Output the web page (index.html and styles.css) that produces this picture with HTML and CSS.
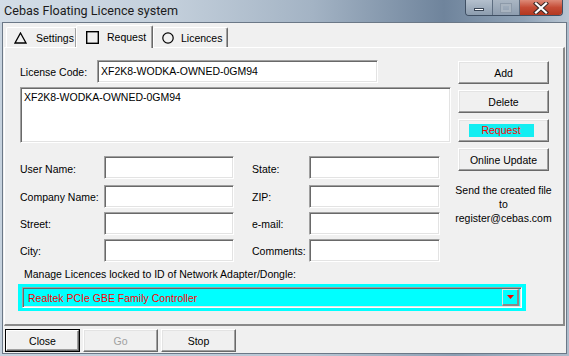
FILE: index.html
```html
<!DOCTYPE html>
<html lang="en">
<head>
    <meta charset="UTF-8">
    <meta name="viewport" content="width=device-width, initial-scale=1.0">
    <title>Cebas Floating Licence system</title>
  <link rel="stylesheet" href="styles.css">
</head>
<body>
<div class="window">
    <div class="titlebar">
        <span class="title">Cebas Floating Licence system</span>
        <div class="caption">
            <span class="cap cap-min"><i></i></span>
            <span class="cap cap-max"><i></i></span>
            <span class="cap cap-close">
                <svg width="16" height="12" viewBox="0 0 16 12">
                    <path d="M3 1.5 L13 10.5 M13 1.5 L3 10.5" stroke="#3b2a28" stroke-width="4.2" stroke-linecap="square"/>
                    <path d="M3 1.5 L13 10.5 M13 1.5 L3 10.5" stroke="#fff" stroke-width="2.2" stroke-linecap="square"/>
                </svg>
            </span>
        </div>
    </div>

    <div class="client">
        <div class="tabs">
            <div class="tab">
                <svg width="13" height="12" viewBox="0 0 13 12"><path d="M6.5 1 L12 11 H1 Z" fill="none" stroke="#000" stroke-width="1.3" stroke-linejoin="miter"/></svg>
                Settings
            </div>
            <div class="tab active">
                <svg width="13" height="13" viewBox="0 0 13 13"><rect x="0.7" y="0.7" width="11.6" height="11.6" fill="none" stroke="#000" stroke-width="1.4"/></svg>
                Request
            </div>
            <div class="tab">
                <svg width="12" height="12" viewBox="0 0 12 12"><circle cx="6" cy="6" r="5.2" fill="none" stroke="#000" stroke-width="1.2"/></svg>
                Licences
            </div>
        </div>

        <div class="panel">
            <div class="main">
                <div class="left">
                    <div class="code-row">
                        <span class="code-label">License Code:</span>
                        <div class="field code-field">XF2K8-WODKA-OWNED-0GM94</div>
                    </div>
                    <div class="field code-list">XF2K8-WODKA-OWNED-0GM94</div>

                    <div class="fields">
                        <span>User Name:</span><div class="field"></div><span></span>
                        <span>State:</span><div class="field"></div>

                        <span>Company Name:</span><div class="field"></div><span></span>
                        <span>ZIP:</span><div class="field"></div>

                        <span>Street:</span><div class="field"></div><span></span>
                        <span>e-mail:</span><div class="field"></div>

                        <span>City:</span><div class="field"></div><span></span>
                        <span>Comments:</span><div class="field"></div>
                    </div>
                </div>

                <div class="right">
                    <div class="btn side-btn">Add</div>
                    <div class="btn side-btn">Delete</div>
                    <div class="btn side-btn"><span class="request-mark">Request</span></div>
                    <div class="btn side-btn">Online Update</div>
                    <p class="note">Send the created file<br>to<br>register@cebas.com</p>
                </div>
            </div>

            <div class="adapter-label">Manage Licences locked to ID of Network Adapter/Dongle:</div>
            <div class="adapter">
                <div class="combo">
                    <span class="combo-text">Realtek PCIe GBE Family Controller</span>
                    <span class="combo-arrow">
                        <svg width="7" height="4" viewBox="0 0 7 4"><path d="M0 0 H7 L3.5 4 Z" fill="#f00"/></svg>
                    </span>
                </div>
            </div>
        </div>

        <div class="footer">
            <div class="btn foot-btn default"><span>Close</span></div>
            <div class="btn foot-btn disabled">Go</div>
            <div class="btn foot-btn">Stop</div>
        </div>
    </div>
</div>
</body>
</html>
```

FILE: styles.css
```css
*{
    margin: 0;
    padding: 0;
    box-sizing: border-box;
}
body{
    width: 569px;
    height: 356px;
    overflow: hidden;
    background: linear-gradient(to right, #c6d2de 0%, #b8c6d4 55%, #8b9eb3 80%, #aebccb 100%);
    font-family: "Liberation Sans", Arial, sans-serif;
    font-size: 10.5px;
    color: #000;
}
.window{
    width: 569px;
    height: 356px;
}

/* title bar */
.titlebar{
    height: 22px;
    display: flex;
    align-items: flex-start;
    justify-content: space-between;
    background: linear-gradient(to right, #d3dde7 0%, #c3cfdb 30%, #a3b3c4 55%, #6f849c 78%, #8fa2b6 92%, #b9c6d3 100%);
}
.title{
    font-family: Roboto, "Noto Sans", sans-serif;
    font-size: 12.6px;
    color: #1b1b1b;
    padding: 3px 0 0 4px;
    line-height: 15px;
}
.caption{
    display: flex;
    margin-right: 6px;
    height: 16px;
    border: 1px solid #3f4f63;
    border-top: none;
    border-radius: 0 0 4px 4px;
    overflow: hidden;
}
.cap{
    display: flex;
    align-items: center;
    justify-content: center;
    height: 100%;
}
.cap-min{
    width: 27px;
    background: linear-gradient(#b4c0cd, #8c9cae);
    border-right: 1px solid #5d6d80;
}
.cap-min i{
    display: block;
    width: 10px;
    height: 3px;
    margin-top: 4px;
    background: #fff;
    border: 1px solid #3a4656;
}
.cap-max{
    width: 27px;
    background: linear-gradient(#aab6c3, #8e9daf);
    border-right: 1px solid #5d6d80;
}
.cap-max i{
    display: block;
    width: 10px;
    height: 8px;
    border: 2px solid #a9b4c0;
    box-shadow: 0 0 0 1px #8d9aa9;
}
.cap-close{
    width: 42px;
    background: linear-gradient(#dd8a78, #c54c36 50%, #b33820);
}

/* client area */
.client{
    margin-left: 2px;
    width: 565px;
    height: 332px;
    background: #f0f0f0;
    border: 1px solid #6b7887;
    padding: 2px 0 0 0;
}

/* tabs */
.tabs{
    display: flex;
    align-items: flex-end;
    height: 23px;
    margin-left: 3px;
    margin-bottom: -1px;
    position: relative;
    z-index: 1;
}
.tab{
    display: flex;
    align-items: center;
    gap: 9px;
    height: 20px;
    margin-bottom: 1px;
    padding: 0 0 0 8px;
    background: #f0f0f0;
    border-top: 1px solid #fff;
    border-left: 1px solid #fff;
    border-right: 1px solid #696969;
    box-shadow: inset -1px 0 #a0a0a0;
    border-radius: 2px 2px 0 0;
    white-space: nowrap;
}
.tab:first-child{
    width: 71px;
    padding-left: 7px;
    gap: 9px;
}
.tab.active{
    width: 77px;
    height: 23px;
    margin-bottom: 0;
    padding-left: 9px;
    gap: 8px;
    margin-left: -1px;
}
.tab:last-child{
    width: 75px;
    gap: 7px;
}

/* panel */
.panel{
    margin-left: 1px;
    width: 561px;
    height: 279px;
    border-top: 1px solid #fff;
    border-left: 1px solid #fff;
    border-right: 2px solid #8a8a8a;
    border-bottom: 2px solid #8a8a8a;
    padding: 12px 0 0 15px;
}
.main{
    display: flex;
    align-items: flex-start;
}
.left{
    width: 431px;
}
.right{
    width: 91px;
    margin-left: 7px;
    padding-top: 1px;
}

.field{
    height: 23px;
    background: #fff;
    border-top: 1px solid #a0a0a0;
    border-left: 1px solid #a0a0a0;
    border-right: 1px solid #fff;
    border-bottom: 1px solid #fff;
    box-shadow: inset 1px 1px #696969, inset -1px -1px #e3e3e3;
    padding: 4px 0 0 3px;
    line-height: 13px;
    white-space: nowrap;
}
.code-row{
    display: flex;
    align-items: center;
}
.code-label{
    width: 77px;
}
.code-field{
    width: 281px;
}
.code-list{
    margin-top: 4px;
    height: 56px;
    padding-top: 3px;
}

.fields{
    display: grid;
    grid-template-columns: 84px 130px 18px 57px 131px;
    row-gap: 4px;
    align-items: center;
    margin-top: 13px;
}
.fields .field:nth-child(-n+5){
    margin-bottom: 2px;
}

/* buttons */
.btn{
    display: flex;
    align-items: center;
    justify-content: center;
    height: 23px;
    background: #f0f0f0;
    border-top: 1px solid #fff;
    border-left: 1px solid #fff;
    border-right: 1px solid #696969;
    border-bottom: 1px solid #696969;
    box-shadow: inset -1px -1px #a0a0a0, inset 1px 1px #e3e3e3;
    white-space: nowrap;
}
.side-btn{
    margin-bottom: 6px;
}
.request-mark{
    display: block;
    width: 65px;
    height: 13px;
    margin-left: -5px;
    background: #13eef2;
    color: #f00;
    text-align: center;
    line-height: 13px;
}
.note{
    margin-top: 12px;
    margin-left: -6px;
    margin-right: -6px;
    text-align: center;
    line-height: 14px;
    white-space: nowrap;
}

/* adapter combo */
.adapter-label{
    margin-top: 6px;
    padding-left: 4px;
    line-height: 13px;
}
.adapter{
    margin: 3px 0 0 -2px;
    width: 508px;
    height: 27px;
    background: #00ffff;
    padding: 3px 4px;
}
.combo{
    display: flex;
    align-items: center;
    height: 21px;
    border-top: 1px solid #a0a0a0;
    border-left: 1px solid #a0a0a0;
    border-right: 1px solid #fff;
    border-bottom: 1px solid #fff;
    box-shadow: inset 1px 1px #696969, inset -1px -1px #e3e3e3;
    padding: 0 2px 0 5px;
    color: #f00;
}
.combo-text{
    flex: 1;
}
.combo-arrow{
    display: flex;
    align-items: center;
    justify-content: center;
    width: 17px;
    height: 17px;
    border-top: 1px solid #e3e3e3;
    border-left: 1px solid #e3e3e3;
    border-right: 2px solid #8a8a8a;
    border-bottom: 2px solid #8a8a8a;
}

/* footer */
.footer{
    display: flex;
    gap: 3px;
    padding: 3px 0 0 2px;
}
.foot-btn{
    width: 75px;
}
.foot-btn.default{
    border: 1px solid #000;
    box-shadow: none;
    padding: 0;
}
.foot-btn.default span{
    display: flex;
    align-items: center;
    justify-content: center;
    width: 100%;
    height: 100%;
    border-top: 1px solid #fff;
    border-left: 1px solid #fff;
    border-right: 1px solid #696969;
    border-bottom: 1px solid #696969;
    box-shadow: inset -1px -1px #a0a0a0;
}
.foot-btn.disabled{
    color: #a0a0a0;
}
```
